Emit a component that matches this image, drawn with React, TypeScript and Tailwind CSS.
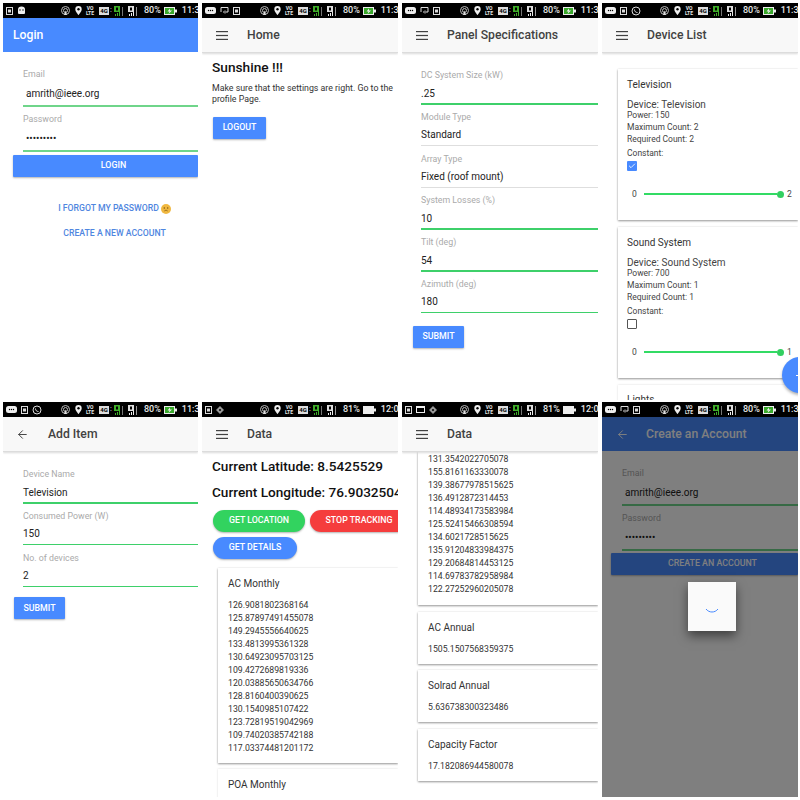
import { ArrowLeft, Check } from "lucide-react";
import type { ReactNode } from "react";

function Box({ w = 7 }: { w?: number }) {
  return (
    <svg width={w} height="8" viewBox="0 0 7 8" className="shrink-0">
      <rect x="0.5" y="0.5" width="6" height="7" fill="none" stroke="#ddd" strokeWidth="1" />
      <rect x="2" y="2.5" width="3" height="3" fill="#ddd" />
    </svg>
  );
}

function Chat() {
  return (
    <svg width="11" height="8" viewBox="0 0 11 8" className="shrink-0">
      <rect x="0" y="0" width="11" height="7" rx="2.5" fill="#eee" />
      <circle cx="3.5" cy="3.5" r="0.7" fill="#000" />
      <circle cx="5.5" cy="3.5" r="0.7" fill="#000" />
      <circle cx="7.5" cy="3.5" r="0.7" fill="#000" />
    </svg>
  );
}

function Sync() {
  return (
    <svg width="9" height="9" viewBox="0 0 9 9" className="shrink-0">
      <path d="M1 6V1.5h7V6H5M5 4.5L3.5 6 5 7.5" fill="none" stroke="#ddd" strokeWidth="1" />
    </svg>
  );
}

function Whatsapp() {
  return (
    <svg width="10" height="10" viewBox="0 0 10 10" className="shrink-0">
      <circle cx="5" cy="5" r="4" fill="none" stroke="#ddd" strokeWidth="1" />
      <path d="M3.5 3.5c0 2 1.2 3 3 3" fill="none" stroke="#ddd" strokeWidth="1" />
    </svg>
  );
}

function Android() {
  return (
    <svg width="9" height="9" viewBox="0 0 9 9" className="shrink-0">
      <path d="M1 3.5a3.5 3 0 0 1 7 0V7a1 1 0 0 1-1 1H2a1 1 0 0 1-1-1z" fill="#eee" />
      <circle cx="3" cy="4" r="0.7" fill="#000" />
      <circle cx="6" cy="4" r="0.7" fill="#000" />
    </svg>
  );
}

function Target() {
  return (
    <svg width="8" height="8" viewBox="0 0 8 8" className="shrink-0">
      <path d="M4 0L8 4 4 8 0 4z" fill="#999" />
      <circle cx="4" cy="4" r="1" fill="#000" />
    </svg>
  );
}

function Picture() {
  return (
    <svg width="9" height="8" viewBox="0 0 9 8" className="shrink-0">
      <rect x="0" y="0" width="9" height="7" fill="#eee" />
      <rect x="1" y="2" width="7" height="4" fill="#000" />
    </svg>
  );
}

function StatusBar({ left, pct = "80%", time = "11:3", full = false }: { left: ReactNode; pct?: string; time?: string; full?: boolean }) {
  return (
    <div className="h-[15px] shrink-0 bg-black flex items-center overflow-hidden whitespace-nowrap text-[#e8e8e8] font-['Roboto',sans-serif] font-medium text-[8px]">
      <div className="w-[58px] shrink-0 pl-[3px] flex items-center gap-[4px]">{left}</div>
      <svg width="9" height="9" viewBox="0 0 9 9" className="shrink-0">
        <circle cx="4.5" cy="4.5" r="4" fill="none" stroke="#bbb" strokeWidth="1" />
        <circle cx="4.5" cy="4.5" r="2" fill="none" stroke="#bbb" strokeWidth="1" />
        <path d="M4.5 4.5L3 9h3z" fill="#ddd" />
      </svg>
      <svg width="7" height="9" viewBox="0 0 7 9" className="shrink-0 ml-[5px]">
        <path d="M3.5 0a3.2 3.2 0 0 1 3.2 3.2C6.700 5.500 3.500 9 3.500 9S.3 5.500.3 3.200A3.200 3.200 0 0 1 3.500 0z" fill="#eee" />
        <circle cx="3.5" cy="3.200" r="1.200" fill="#000" />
      </svg>
      <span className="ml-[3px] w-[10px] text-center text-[5px] leading-[5px] font-bold shrink-0">VO<br />LTE</span>
      <span className="ml-[4px] w-[10px] h-[8px] bg-[#ddd] text-black text-[6px] leading-[8px] text-center font-bold shrink-0">4G</span>
      <span className="ml-[1px] w-[4px] text-[7px] text-[#ccc] shrink-0">:</span>
      <svg width="10" height="10" viewBox="0 0 10 10" className="shrink-0">
        <rect x="0" y="0" width="6" height="6" fill="#3fae29" />
        <rect x="2" y="1.500" width="2" height="3" fill="#000" />
        <rect x="1" y="8" width="1" height="2" fill="#3fae29" />
        <rect x="3" y="7" width="1" height="3" fill="#3fae29" />
        <rect x="5" y="6" width="1" height="4" fill="#3fae29" />
        <rect x="8" y="1" width="1" height="9" fill="#777" />
      </svg>
      <svg width="11" height="10" viewBox="0 0 11 10" className="shrink-0 ml-[4px]">
        <rect x="0" y="0" width="6" height="6" fill="#ddd" />
        <rect x="2" y="1.500" width="2" height="3" fill="#000" />
        <rect x="1" y="8" width="1" height="2" fill="#eee" />
        <rect x="3" y="7" width="1" height="3" fill="#eee" />
        <rect x="5" y="6" width="1" height="4" fill="#eee" />
        <rect x="8" y="1" width="1" height="9" fill="#999" />
      </svg>
      <span className="ml-[5px] shrink-0 text-[9px]">{pct}</span>
      <svg width="13" height="8" viewBox="0 0 13 8" className="shrink-0 ml-[3px]">
        <rect x="0" y="0" width="11" height="8" fill="#eee" />
        <rect x="11" y="2.500" width="2" height="3" fill="#eee" />
        {!full && <rect x="1" y="1" width="9" height="6" fill="#39a92b" />}
        {!full && <path d="M6 1.500L3.500 4.500H5.500L4.500 7 8 3.500H6z" fill="#eee" />}
      </svg>
      <span className="ml-[5px] shrink-0 text-[9px]">{time}</span>
    </div>
  );
}

function Burger() {
  return (
    <svg width="12" height="9" viewBox="0 0 12 9" className="shrink-0">
      <rect x="0" y="0" width="12" height="1.200" fill="#424242" />
      <rect x="0" y="3.900" width="12" height="1.200" fill="#424242" />
      <rect x="0" y="7.800" width="12" height="1.200" fill="#424242" />
    </svg>
  );
}

function Toolbar({ title, back = false }: { title: string; back?: boolean }) {
  return (
    <div className="h-[35px] shrink-0 bg-[#f8f8f8] border-b border-[#dcdcdc] shadow-[0_1px_2px_rgba(0,0,0,0.15)] flex items-center z-10">
      <div className="w-[45px] shrink-0 pl-[14px] flex items-center">
        {back ? <ArrowLeft size={13} strokeWidth={1.8} className="text-[#424242] -ml-[1px]" /> : <Burger />}
      </div>
      <span className="text-[12.200px] font-medium text-[#424242] whitespace-nowrap">{title}</span>
    </div>
  );
}

function Field({ label, value, valueH = 20, green = true, inset = false, pale = false, left = 20 }: { label: string; value: string; valueH?: number; green?: boolean; inset?: boolean; pale?: boolean; left?: number }) {
  return (
    <div className="pb-[6.800px]" style={{ marginLeft: left }}>
      <div className="h-[10px] text-[8.800px] leading-[10px] text-[#aaaaaa] whitespace-nowrap">{label}</div>
      <div
        className={`mt-[3px] flex items-center text-[10px] text-[#222] ${inset ? "pl-[3px]" : ""}`}
        style={{ height: valueH }}
      >
        {value}
      </div>
      {green ? (
        <div className={pale ? "h-[2px] bg-[#6fd58a]" : "h-[1.500px] mb-[0.500px] bg-[#3ed06a]"} />
      ) : (
        <div className="h-[1px] mb-[1px] bg-[#dedede]" />
      )}
    </div>
  );
}

function Btn({ children, className }: { children: ReactNode; className: string }) {
  return (
    <div className={`h-[22px] shrink-0 flex items-center justify-center text-white text-[8.800px] font-medium whitespace-nowrap shadow-[0_1px_2px_rgba(0,0,0,0.3)] ${className}`}>
      {children}
    </div>
  );
}

function Card({ title, lines, className = "" }: { title: string; lines: string[]; className?: string }) {
  return (
    <div className={`ml-[16px] shrink-0 bg-white pl-[10px] pt-[10px] pb-[8px] shadow-[0_1px_2px_rgba(0,0,0,0.4),0_0_2px_rgba(0,0,0,0.08)] ${className}`}>
      <div className="text-[10px] leading-[12px] text-[#333]">{title}</div>
      <div className="mt-[9px] text-[8.700px] leading-[13px] text-[#333]">
        {lines.map((l) => (
          <div key={l}>{l}</div>
        ))}
      </div>
    </div>
  );
}

function DeviceCard({ name, power, max, req, checked, className = "" }: { name: string; power: string; max: string; req: string; checked: boolean; className?: string }) {
  return (
    <div className={`ml-[16px] h-[151px] shrink-0 bg-white pl-[9px] pt-[10px] text-[#444] shadow-[0_1px_2px_rgba(0,0,0,0.4),0_0_2px_rgba(0,0,0,0.08)] ${className}`}>
      <div className="text-[10px] leading-[12px] text-[#333]">{name}</div>
      <div className="mt-[8px] text-[10px] leading-[12px]">Device: {name}</div>
      <div className="text-[8.500px] leading-[12px] -mt-[2px]">Power: {power}</div>
      <div className="text-[8.500px] leading-[12px]">Maximum Count: {max}</div>
      <div className="text-[8.500px] leading-[12px]">Required Count: {req}</div>
      <div className="mt-[2px] text-[8.500px] leading-[12px]">Constant:</div>
      <div className={`mt-[2px] w-[10px] h-[10px] rounded-[1px] flex items-center justify-center ${checked ? "bg-[#488aff]" : "border border-[#555]"}`}>
        {checked && <Check size={8} strokeWidth={2.5} className="text-white" />}
      </div>
      <div className="mt-[17px] flex items-center text-[8.500px] h-[12px]">
        <span className="w-[17px] pl-[5px] shrink-0">0</span>
        <div className="w-[133px] h-[1.500px] bg-[#32db64]" />
        <div className="w-[7px] h-[7px] rounded-full bg-[#32cf60] shrink-0" />
        <span className="ml-[3px]">{max}</span>
      </div>
    </div>
  );
}

function Phone({ children, className = "" }: { children: ReactNode; className?: string }) {
  return <div className={`relative overflow-hidden flex flex-col bg-white ${className}`}>{children}</div>;
}

function LoginForm() {
  return (
    <div className="pt-[17px]">
      <Field label="Email" value="amrith@ieee.org" valueH={23} inset pale />
      <Field label="Password" value="•••••••••" valueH={23} inset pale />
    </div>
  );
}

const acMonthly = [
  "126.9081802368164",
  "125.87897491455078",
  "149.2945556640625",
  "133.4813995361328",
  "130.64923095703125",
  "109.4272689819336",
  "120.03885650634766",
  "128.8160400390625",
  "130.1540985107422",
  "123.72819519042969",
  "109.74020385742188",
  "117.03374481201172",
];

const poaMonthly = [
  "131.3542022705078",
  "155.8161163330078",
  "139.38677978515625",
  "136.4912872314453",
  "114.48934173583984",
  "125.52415466308594",
  "134.6021728515625",
  "135.91204833984375",
  "129.20684814453125",
  "114.69783782958984",
  "122.27252960205078",
];

export default function App() {
  return (
    <div className="w-[800px] h-[800px] bg-white overflow-hidden font-['Roboto',sans-serif] grid grid-cols-[195px_196px_196px_196px] grid-rows-[397px_395px] gap-x-[4px] gap-y-[2px] pl-[3px] pt-[3px]">
      {/* login */}
      <Phone>
        <StatusBar left={<><Box /><Android /></>} />
        <div className="h-[34px] shrink-0 bg-[#488aff] flex items-center pl-[10px] text-white text-[12.200px] font-medium">Login</div>
        <LoginForm />
        <Btn className="ml-[10px] pl-[16px] -mt-[4px] bg-[#488aff] rounded-[1px]">LOGIN</Btn>
        <div className="mt-[26px] h-[12px] flex items-center justify-center gap-[2px] pl-[28px] text-[8.700px] font-medium text-[#4f86e0]">
          I FORGOT MY PASSWORD
          <svg width="10" height="10" viewBox="0 0 10 10">
            <circle cx="5" cy="5" r="5" fill="#f0b840" />
            <circle cx="3.300" cy="4" r="0.700" fill="#7a5210" />
            <circle cx="6.700" cy="4" r="0.700" fill="#7a5210" />
            <path d="M3.300 7a2 1.500 0 0 1 3.400 0" fill="none" stroke="#7a5210" strokeWidth="0.700" />
          </svg>
        </div>
        <div className="mt-[13px] h-[12px] flex items-center justify-center pl-[28px] text-[8.700px] font-medium text-[#4f86e0]">CREATE A NEW ACCOUNT</div>
      </Phone>

      {/* home */}
      <Phone>
        <StatusBar left={<><Chat /><Sync /><Box /></>} />
        <Toolbar title="Home" />
        <div className="pl-[10px] pt-[5px]">
          <div className="text-[13.700px] leading-[18px] font-medium text-[#111]">Sunshine !!!</div>
          <p className="mt-[7px] text-[8.800px] leading-[11px] text-[#333]">Make sure that the settings are right. Go to the profile Page.</p>
          <Btn className="mt-[12px] ml-[1px] w-[53px] bg-[#488aff] rounded-[1px]">LOGOUT</Btn>
        </div>
      </Phone>

      {/* panel specifications */}
      <Phone>
        <StatusBar left={<><Chat /><Sync /><Box /></>} />
        <Toolbar title="Panel Specifications" />
        <div className="pt-[17px]">
          <Field left={19} label="DC System Size (kW)" value=".25" />
          <Field left={19} label="Module Type" value="Standard" green={false} />
          <Field left={19} label="Array Type" value="Fixed (roof mount)" green={false} />
          <Field left={19} label="System Losses (%)" value="10" />
          <Field left={19} label="Tilt (deg)" value="54" />
          <Field left={19} label="Azimuth (deg)" value="180" />
        </div>
        <Btn className="mt-[5px] ml-[11px] w-[51px] bg-[#488aff] rounded-[1px]">SUBMIT</Btn>
      </Phone>

      {/* device list */}
      <Phone>
        <StatusBar left={<><Chat /><Box /><Whatsapp /></>} />
        <Toolbar title="Device List" />
        <div className="pt-[16px] flex flex-col gap-[7px]">
          <DeviceCard name="Television" power="150" max="2" req="2" checked />
          <DeviceCard name="Sound System" power="700" max="1" req="1" checked={false} />
          <div className="ml-[16px] h-[40px] shrink-0 bg-white pl-[9px] pt-[9px] text-[10px] leading-[12px] text-[#333] shadow-[0_0_2px_rgba(0,0,0,0.15)]">Lights</div>
        </div>
        <div className="absolute left-[180px] top-[354px] w-[36px] h-[36px] rounded-full bg-[#488aff] shadow-[0_2px_3px_rgba(0,0,0,0.3)] flex items-center justify-center">
          <div className="w-[8px] h-[1px] bg-white" />
        </div>
      </Phone>

      {/* add item */}
      <Phone>
        <StatusBar left={<><Chat /><Box /><Whatsapp /></>} />
        <Toolbar title="Add Item" back />
        <div className="pt-[17px]">
          <Field label="Device Name" value="Television" />
          <Field label="Consumed Power (W)" value="150" />
          <Field label="No. of devices" value="2" />
        </div>
        <Btn className="mt-[3px] ml-[11px] w-[51px] bg-[#488aff] rounded-[1px]">SUBMIT</Btn>
      </Phone>

      {/* data */}
      <Phone>
        <StatusBar left={<><Box /><Target /></>} pct="81%" time="12:0" full />
        <Toolbar title="Data" />
        <div className="pl-[10px] pt-[5px] text-[13.600px] leading-[18px] font-medium text-[#111] whitespace-nowrap">
          <div>Current Latitude: 8.5425529</div>
          <div className="mt-[8px]">Current Longitude: 76.9032504</div>
        </div>
        <div className="ml-[11px] mt-[9px] flex gap-[5px]">
          <Btn className="w-[92px] rounded-full bg-[#32d35f]">GET LOCATION</Btn>
          <Btn className="w-[98px] rounded-full bg-[#f53d3d]">STOP TRACKING</Btn>
        </div>
        <Btn className="ml-[11px] mt-[5px] w-[84px] rounded-full bg-[#488aff]">GET DETAILS</Btn>
        <Card title="AC Monthly" lines={acMonthly} className="mt-[9px]" />
        <div className="ml-[16px] mt-[6px] bg-white pl-[10px] pt-[10px] h-[40px] shrink-0 text-[10px] leading-[12px] text-[#333] shadow-[0_0_2px_rgba(0,0,0,0.15)]">POA Monthly</div>
      </Phone>

      {/* data, scrolled */}
      <Phone>
        <StatusBar left={<><Box /><Picture /><Target /></>} pct="81%" time="12:0" full />
        <Toolbar title="Data" />
        <div className="flex flex-col gap-[6.500px]">
          <div className="ml-[16px] bg-white pl-[10px] pt-[1px] pb-[9px] text-[8.700px] leading-[13px] text-[#333] shadow-[0_1px_2px_rgba(0,0,0,0.4),0_0_2px_rgba(0,0,0,0.08)]">
            {poaMonthly.map((l) => (
              <div key={l}>{l}</div>
            ))}
          </div>
          <Card title="AC Annual" lines={["1505.1507568359375"]} />
          <Card title="Solrad Annual" lines={["5.636738300323486"]} />
          <Card title="Capacity Factor" lines={["17.182086944580078"]} />
        </div>
      </Phone>

      {/* create account, loading */}
      <Phone>
        <StatusBar left={<><Chat /><Sync /><Box /></>} />
        <div className="h-[34px] shrink-0 bg-[#488aff] flex items-center text-white">
          <div className="w-[44px] shrink-0 pl-[14px]">
            <ArrowLeft size={13} strokeWidth={1.8} />
          </div>
          <span className="text-[12.200px] font-medium">Create an Account</span>
        </div>
        <LoginForm />
        <Btn className="ml-[9px] pl-[16px] -mt-[5px] bg-[#488aff] rounded-[1px]">CREATE AN ACCOUNT</Btn>
        <div className="absolute left-0 right-0 top-[15px] bottom-0 bg-black/50" />
        <div className="absolute left-[86px] top-[180px] w-[48px] h-[49px] bg-[#fafafa] shadow-[0_5px_10px_rgba(0,0,0,0.5)] flex items-center justify-center">
          <svg width="14" height="6" viewBox="0 0 14 6" className="mt-[8px]">
            <path d="M1 1c3 4 9 4 12 0" fill="none" stroke="#488aff" strokeWidth="1" />
          </svg>
        </div>
      </Phone>
    </div>
  );
}
